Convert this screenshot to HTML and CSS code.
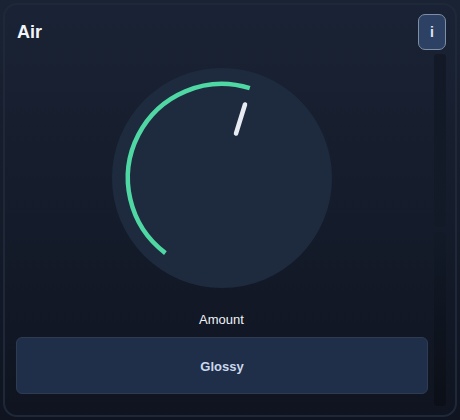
FILE: index.html
```html
<!DOCTYPE html>
<html lang="en">
<head>
<meta charset="utf-8">
<title>Air</title>
<link rel="stylesheet" href="styles.css">
</head>
<body>
<section class="card">
  <div class="main">
    <h1 class="title">Air</h1>
    <div class="knob">
      <svg class="knob-svg" width="220" height="220" viewBox="0 0 220 220" aria-hidden="true">
        <circle class="knob-face" cx="110" cy="110" r="110"/>
        <path class="knob-arc" d="M 53.4 185.1 A 94 94 0 0 1 137.8 20.2"/>
        <line class="knob-pointer" x1="124" y1="65.5" x2="133" y2="36.5"/>
      </svg>
    </div>
    <div class="label">Amount</div>
    <button class="mode" type="button">Glossy</button>
  </div>
  <div class="side">
    <button class="info" type="button">i</button>
    <div class="track track-top"></div>
    <div class="track track-bottom"></div>
  </div>
</section>
</body>
</html>
```
FILE: styles.css
```css
* { box-sizing: border-box; }
html, body { margin: 0; height: 100%; }
body {
  width: 460px;
  height: 420px;
  padding: 3px;
  overflow: hidden;
  background: linear-gradient(180deg, #1a2334, #0f1420);
  font-family: "Liberation Sans", Arial, sans-serif;
}
.card {
  width: 454px;
  height: 414px;
  padding: 9px 9px 11px 10px;
  display: grid;
  grid-template-columns: 413px 12px;
  column-gap: 6px;
  border: 2px solid #1f2839;
  border-radius: 14px;
  background: linear-gradient(180deg, #1a2335, #0f1420);
}
.main { display: flex; flex-direction: column; min-width: 0; }
.title {
  margin: 0;
  height: 36px;
  padding: 7px 0 0 2px;
  font-size: 18px;
  line-height: 22px;
  font-weight: 700;
  color: #f1f5f9;
}
.knob { margin-top: 18px; align-self: center; height: 220px; }
.knob-svg { display: block; }
.knob-face { fill: #1e2b3f; }
.knob-arc { fill: none; stroke: #4fd8a4; stroke-width: 4.5px; }
.knob-pointer { stroke: #e8ecf2; stroke-width: 4.5px; stroke-linecap: round; }
.label {
  margin-top: 24px;
  text-align: center;
  font-size: 13px;
  line-height: 16px;
  color: #eef2f7;
}
.mode {
  margin: 9px 0 0 1px;
  height: 57px;
  padding: 1px 0 0;
  border: 1px solid #2f3b51;
  border-radius: 6px;
  background: #1f2f4a;
  color: #cbd8ec;
  font: 700 13px "Liberation Sans", Arial, sans-serif;
}
.side { display: flex; flex-direction: column; align-items: flex-end; }
.info {
  flex: none;
  width: 28px;
  height: 36px;
  margin: 0 0 4px -16px;
  padding: 0;
  border: 1px solid #7f8ea3;
  border-radius: 7px;
  background: #2d4164;
  color: #dfe6ef;
  font: 700 14px "Liberation Sans", Arial, sans-serif;
}
.track { flex: none; width: 12px; border-radius: 3px; }
.track-top { height: 173px; margin-bottom: 5px; background: linear-gradient(180deg, #131926, #121a28); }
.track-bottom { height: 174px; background: linear-gradient(180deg, #121a28, #0b0f17); }
```
